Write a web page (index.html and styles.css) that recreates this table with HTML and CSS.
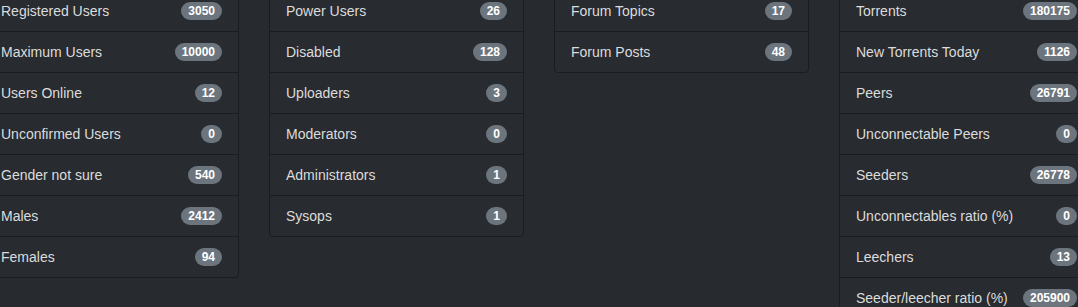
FILE: index.html
```html
<!DOCTYPE html>
<html lang="en">
<head>
<meta charset="utf-8">
<title>Stats</title>
<link rel="stylesheet" href="styles.css">
</head>
<body>
<div class="stats">
  <ul class="card">
    <li class="item"><span>Registered Users</span><span class="badge">3050</span></li>
    <li class="item"><span>Maximum Users</span><span class="badge">10000</span></li>
    <li class="item"><span>Users Online</span><span class="badge">12</span></li>
    <li class="item"><span>Unconfirmed Users</span><span class="badge">0</span></li>
    <li class="item"><span>Gender not sure</span><span class="badge">540</span></li>
    <li class="item"><span>Males</span><span class="badge">2412</span></li>
    <li class="item"><span>Females</span><span class="badge">94</span></li>
  </ul>
  <ul class="card">
    <li class="item"><span>Power Users</span><span class="badge">26</span></li>
    <li class="item"><span>Disabled</span><span class="badge">128</span></li>
    <li class="item"><span>Uploaders</span><span class="badge">3</span></li>
    <li class="item"><span>Moderators</span><span class="badge">0</span></li>
    <li class="item"><span>Administrators</span><span class="badge">1</span></li>
    <li class="item"><span>Sysops</span><span class="badge">1</span></li>
  </ul>
  <ul class="card">
    <li class="item"><span>Forum Topics</span><span class="badge">17</span></li>
    <li class="item"><span>Forum Posts</span><span class="badge">48</span></li>
  </ul>
  <ul class="card">
    <li class="item"><span>Torrents</span><span class="badge">180175</span></li>
    <li class="item"><span>New Torrents Today</span><span class="badge">1126</span></li>
    <li class="item"><span>Peers</span><span class="badge">26791</span></li>
    <li class="item"><span>Unconnectable Peers</span><span class="badge">0</span></li>
    <li class="item"><span>Seeders</span><span class="badge">26778</span></li>
    <li class="item"><span>Unconnectables ratio (%)</span><span class="badge">0</span></li>
    <li class="item"><span>Leechers</span><span class="badge">13</span></li>
    <li class="item"><span>Seeder/leecher ratio (%)</span><span class="badge">205900</span></li>
  </ul>
</div>
</body>
</html>
```

FILE: styles.css
```css
html, body {
  margin: 0;
  padding: 0;
  background: #272a2f;
  overflow: hidden;
}

body {
  font-family: "Liberation Sans", Arial, sans-serif;
  font-size: 14px;
  color: #dcdcdc;
}

.stats {
  display: flex;
  align-items: flex-start;
  gap: 30px;
  margin-left: -16px;
  margin-top: -10px;
}

.card {
  flex: 0 0 255px;
  box-sizing: border-box;
  width: 255px;
  margin: 0;
  padding: 0;
  list-style: none;
  background: #282b30;
  border: 1px solid #1a1c1f;
  border-radius: 4px;
}

.item {
  display: flex;
  align-items: center;
  justify-content: space-between;
  height: 40px;
  padding: 0 16px;
  border-bottom: 1px solid #1a1c1f;
}

.item:last-child {
  border-bottom: 0;
}

.badge {
  display: inline-block;
  background: #6c757d;
  color: #fff;
  font-weight: bold;
  font-size: 12px;
  line-height: 12px;
  padding: 3px 7px;
  border-radius: 10px;
}
```
